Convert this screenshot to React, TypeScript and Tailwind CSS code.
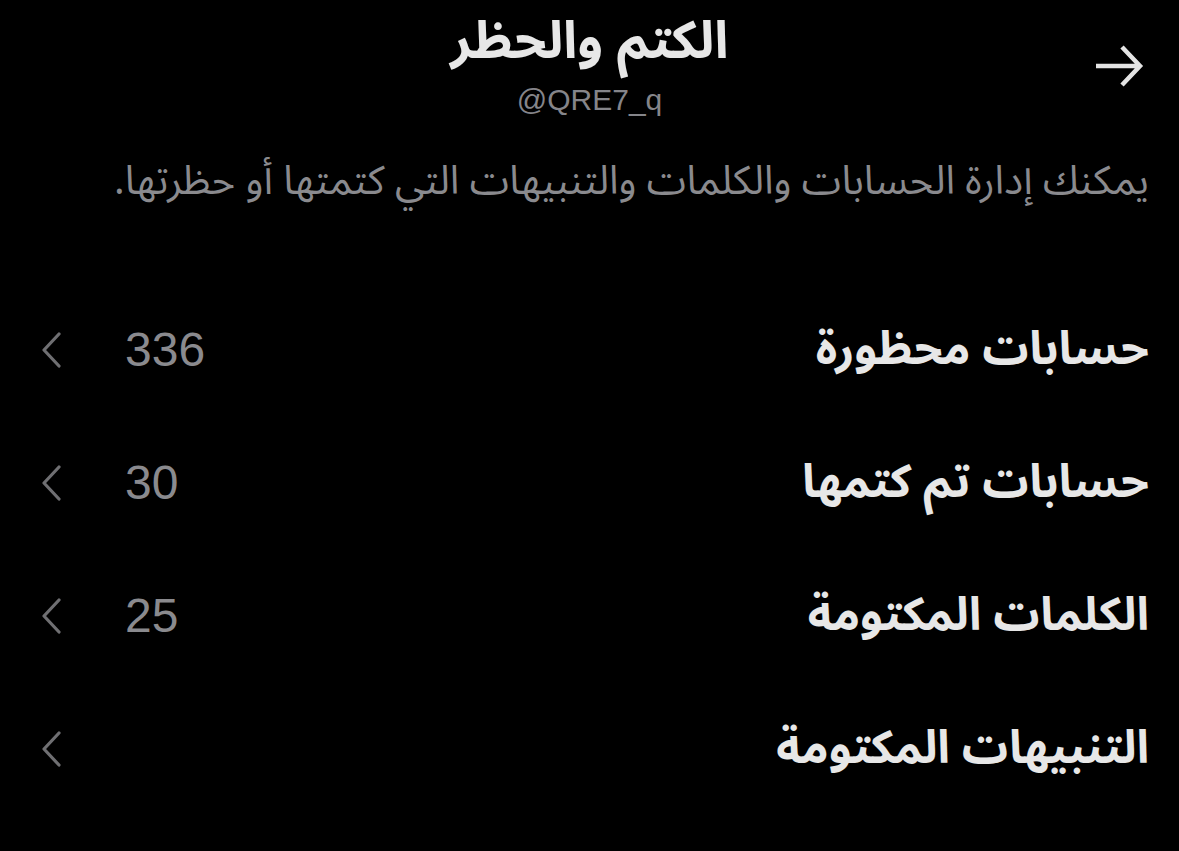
import React from "react";

const rows = [
  { label: "حسابات محظورة", count: "336" },
  { label: "حسابات تم كتمها", count: "30" },
  { label: "الكلمات المكتومة", count: "25" },
  { label: "التنبيهات المكتومة", count: "" },
];

function Chevron() {
  return (
    <svg width="22" height="36" viewBox="0 0 22 36" fill="none">
      <path d="M19 2 L4 18 L19 34" stroke="#6f6f72" strokeWidth="3.2" strokeLinecap="round" strokeLinejoin="round" />
    </svg>
  );
}

function Arrow() {
  return (
    <svg width="52" height="46" viewBox="0 0 52 46" fill="none">
      <path d="M3 23 H47 M29 4 L47 23 L29 42" stroke="#e4e4e4" strokeWidth="4.5" strokeLinecap="butt" strokeLinejoin="miter" />
    </svg>
  );
}

export default function App() {
  return (
    <div
      dir="rtl"
      className="w-[1179px] h-[851px] bg-black overflow-hidden"
      style={{ fontFamily: '"Noto Sans Arabic", "DejaVu Sans", "Liberation Sans", sans-serif' }}
    >
      <div className="relative h-[130px] flex flex-col items-center pt-[6px]">
        <div className="absolute right-[34px] top-[43px]">
          <Arrow />
        </div>
        <div className="text-[52px] leading-[72px] font-bold text-[#e7e7e7]">الكتم والحظر</div>
        <div
          dir="ltr"
          className="mt-[4px] text-[30px] leading-[36px] text-[#85858a]"
          style={{ fontFamily: '"Liberation Sans", sans-serif' }}
        >
          @QRE7_q
        </div>
      </div>
      <div className="pr-[30px] pl-[30px] mt-[28px] text-[40px] leading-[48px] text-[#8a8a8e] whitespace-nowrap">
        يمكنك إدارة الحسابات والكلمات والتنبيهات التي كتمتها أو حظرتها.
      </div>
      <div className="mt-[77px] flex flex-col">
        {rows.map((r) => (
          <div key={r.label} className="h-[133px] flex items-center pr-[30px] pl-[40px]">
            <div className="flex-1 text-[46px] font-bold text-[#e7e7e7] leading-[64px]">{r.label}</div>
            <div
              dir="ltr"
              className="w-[120px] text-left text-[48px] leading-[56px] text-[#8a8a8e]"
              style={{ fontFamily: '"Liberation Sans", sans-serif' }}
            >
              {r.count}
            </div>
            <div className="w-[85px] flex justify-end">
              <Chevron />
            </div>
          </div>
        ))}
      </div>
    </div>
  );
}
